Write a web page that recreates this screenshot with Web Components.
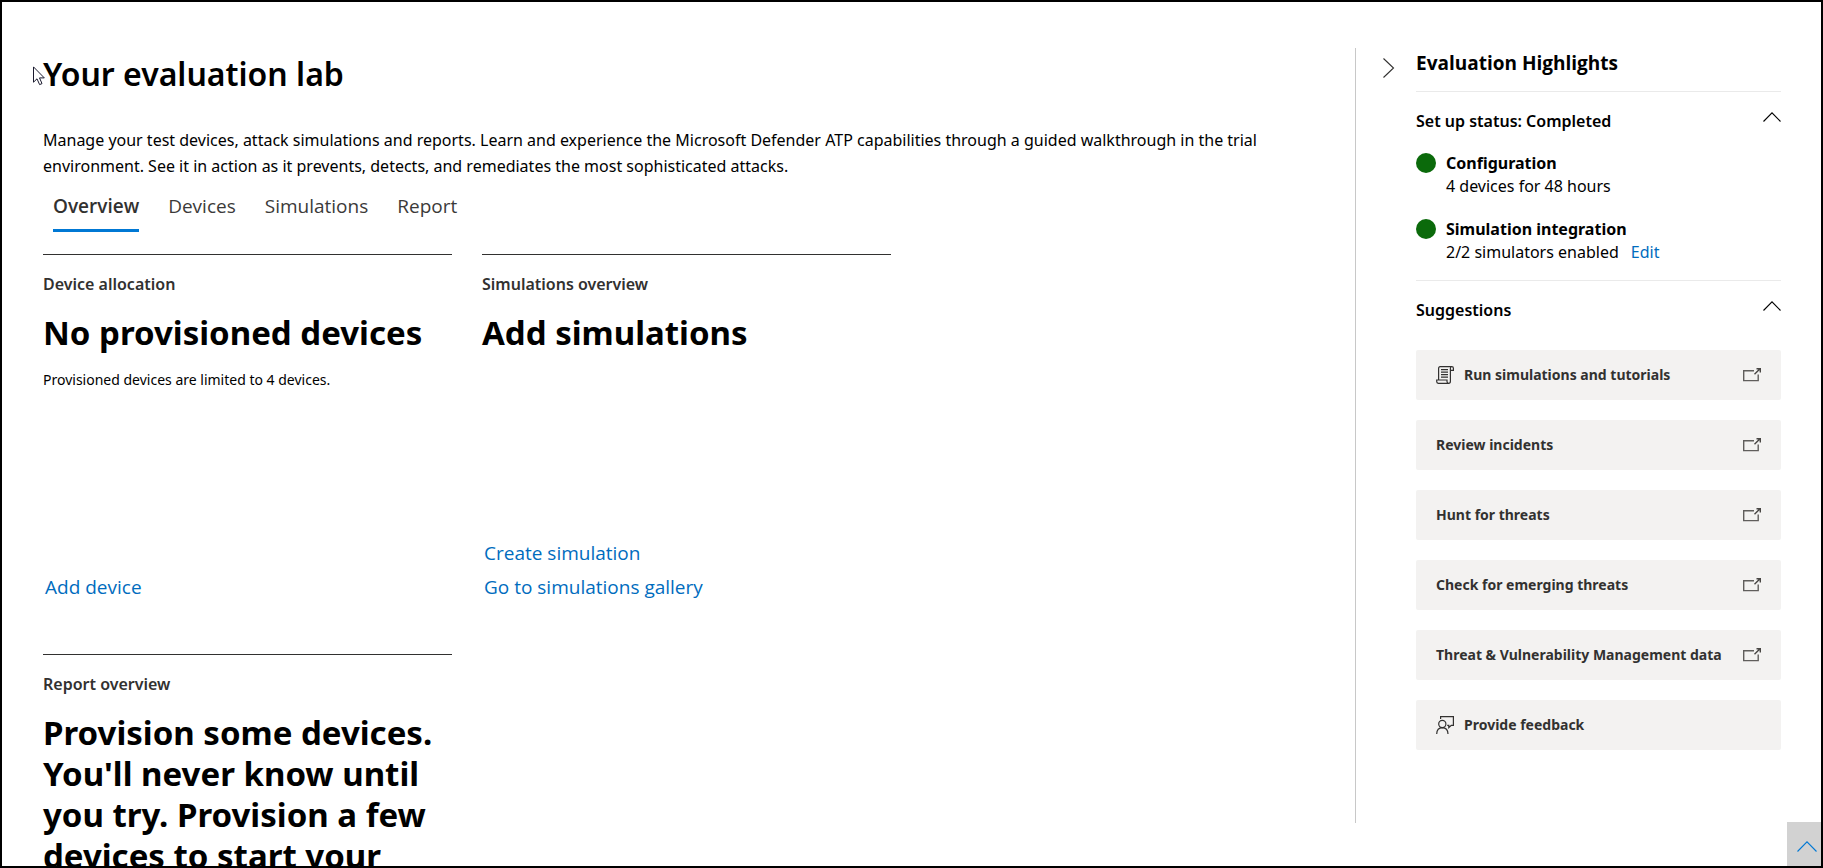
<!DOCTYPE html>
<html lang="en">
<head>
<meta charset="utf-8">
<title>Your evaluation lab</title>
<style>
  body {
    margin: 0;
    background: #fff;
    color: #000;
    font: 400 16px/24px "Noto Sans", "Open Sans", sans-serif;
    --font-wide: "Open Sans", "Noto Sans", sans-serif;
    --link: #006cbe;
    --accent: #0078d4;
  }
</style>
</head>
<body>
<lab-app>
  <lab-header slot="main" heading="Your evaluation lab">Manage your test devices, attack simulations and reports. Learn and experience the Microsoft Defender ATP capabilities through a guided walkthrough in the trial environment. See it in action as it prevents, detects, and remediates the most sophisticated attacks.</lab-header>
  <lab-tabs slot="main" items="Overview,Devices,Simulations,Report"></lab-tabs>
  <lab-cards slot="main">
    <lab-card label="Device allocation" heading="No provisioned devices">
      Provisioned devices are limited to 4 devices.
      <lab-link slot="actions">Add device</lab-link>
    </lab-card>
    <lab-card label="Simulations overview" heading="Add simulations">
      <lab-link slot="actions">Create simulation</lab-link>
      <lab-link slot="actions">Go to simulations gallery</lab-link>
    </lab-card>
    <lab-card label="Report overview" heading="Provision some devices. You'll never know until you try. Provision a few devices to start your"></lab-card>
  </lab-cards>

  <lab-highlights slot="aside" heading="Evaluation Highlights">
    <lab-section heading="Set up status: Completed">
      <lab-status heading="Configuration">4 devices for 48 hours</lab-status>
      <lab-status heading="Simulation integration">2/2 simulators enabled<lab-link inline>Edit</lab-link></lab-status>
    </lab-section>
    <lab-section heading="Suggestions" wide>
      <lab-action icon="script" external>Run simulations and tutorials</lab-action>
      <lab-action external>Review incidents</lab-action>
      <lab-action external>Hunt for threats</lab-action>
      <lab-action external>Check for emerging threats</lab-action>
      <lab-action external>Threat &amp; Vulnerability Management data</lab-action>
      <lab-action icon="feedback">Provide feedback</lab-action>
    </lab-section>
  </lab-highlights>
</lab-app>

<script>
const define = (name, render) => customElements.define(name, class extends HTMLElement {
  connectedCallback() {
    if (this.shadowRoot) return;
    const template = document.createElement('template');
    template.innerHTML = '<style>*{box-sizing:border-box}:host{display:block}h1,h2,h3,p{margin:0}button{font:inherit;color:inherit;border:0;background:none;padding:0;margin:0;cursor:pointer}svg{display:block;flex:none}</style>' + render(this);
    this.attachShadow({ mode: 'open' }).append(template.content.cloneNode(true));
  }
});
const attr = (el, name) => el.getAttribute(name) || '';

const chevronUp = (w, h, color) =>
  `<svg width="${w}" height="${h}" viewBox="0 0 ${w} ${h}" fill="none" stroke="${color}" stroke-width="1.1" aria-hidden="true"><path d="M.5 ${h - .5}L${w / 2} .8L${w - .5} ${h - .5}"/></svg>`;

const icons = {
  script: `<svg width="18" height="18" viewBox="0 0 18 18" fill="none" stroke="#323130" stroke-width="1.2" aria-hidden="true"><path d="M2.6 13.5V2.4Q2.6.7 4.2.7H15.8Q17.4.7 17.4 2.3V4.4H14.4M14.4 15.2V2.3Q14.4.7 15.8.7M2.6 14H.7V15.6Q.7 17.3 2.3 17.3H12.6Q14.4 17.3 14.4 15.2M2.6 14H11V15.6Q11 17.3 12.6 17.3"/><path d="M5 3.6H12M5 6.1H12M5 8.6H12M5 11.1H12"/></svg>`,
  feedback: `<svg width="18" height="18" viewBox="0 0 18 18" fill="none" stroke="#323130" stroke-width="1.2" aria-hidden="true"><path d="M4.6 3V.7H17.4V9.3H15.3L12.8 11.6V9.3H11.2"/><circle cx="6.3" cy="8" r="3.6"/><path d="M.7 18Q.9 11.8 6.3 11.7Q11.8 11.8 12 18"/></svg>`,
  external: `<svg width="18" height="14" viewBox="0 0 18 14" fill="none" stroke="#605e5c" stroke-width="1.4" aria-hidden="true"><path d="M11 2.7H.7V12.6H15.2V6.5"/><path d="M11.5 6.3L16.8 1M13.5.8H17.3V4.6" stroke="#484644"/></svg>`
};

define('lab-app', () => `
  <style>
    :host { position: relative; display: flex; height: 100vh; box-sizing: border-box; border: 2px solid #000; overflow: hidden; }
    main { flex: 1; min-width: 0; padding: 50px 50px 0 41px; }
    aside { width: 466px; flex: none; margin: 46px 0 43px; border-left: 1px solid #c8c8c8; }
    .top { position: absolute; right: 0; bottom: 0; width: 34px; height: 44px; display: grid; place-items: center; padding: 4px 0 0 6px; background: #d2d2d2; }
    .pointer { position: absolute; left: 31px; top: 64px; }
  </style>
  <main><slot name="main"></slot></main>
  <aside><slot name="aside"></slot></aside>
  <button class="top" aria-label="Scroll to top">${chevronUp(20, 11, 'var(--accent)')}</button>
  <svg class="pointer" width="12" height="20" viewBox="0 0 12 20" fill="#fff" stroke="#1a1a2e" aria-hidden="true"><path d="M.5 .9V16.2L4 12.8L6.6 18.6L9 17.6L6.5 11.9H11.3Z"/></svg>
`);

define('lab-header', el => `
  <style>
    h1 { font-size: 32px; line-height: 44px; font-weight: 600; }
    p { margin-top: 31px; line-height: 26px; }
  </style>
  <h1>${attr(el, 'heading')}</h1>
  <p><slot></slot></p>
`);

define('lab-tabs', el => `
  <style>
    [role=tablist] { display: flex; gap: 29px; padding: 0 10px; }
    button { padding: 14px 0 10px; border-bottom: 3px solid transparent; color: #3b3a39; font: 400 19px/26px var(--font-wide); }
    [aria-selected=true] { font-weight: 600; color: #323130; border-color: var(--accent); }
  </style>
  <div role="tablist">${attr(el, 'items').split(',').map((t, i) => `<button role="tab" aria-selected="${i === 0}">${t}</button>`).join('')}</div>
`);

define('lab-cards', () => `
  <style>
    :host { display: grid; grid-template-columns: repeat(auto-fill, 409px); grid-auto-rows: minmax(370px, auto); gap: 30px; margin-top: 22px; }
  </style>
  <slot></slot>
`);

define('lab-card', el => `
  <style>
    :host { display: flex; flex-direction: column; gap: 16px; box-sizing: border-box; border-top: 1px solid #323130; padding: 17px 0 20px; }
    h2 { font-size: 16px; line-height: 24px; font-weight: 600; color: #323130; }
    h3 { font-size: 33px; line-height: 41px; font-weight: 700; }
    p { font-size: 14px; line-height: 22px; }
    div { margin-top: auto; padding-left: 2px; }
  </style>
  <h2>${attr(el, 'label')}</h2>
  <h3>${attr(el, 'heading')}</h3>
  <p><slot></slot></p>
  <div><slot name="actions"></slot></div>
`);

define('lab-link', () => `
  <style>
    :host { font: 400 19px/34px var(--font-wide); }
    :host([inline]) { display: inline-block; margin-left: 12px; font: inherit; }
    a { color: var(--link); text-decoration: none; }
  </style>
  <a href="#"><slot></slot></a>
`);

define('lab-highlights', el => `
  <style>
    :host { display: flex; padding: 0 40px 0 27px; }
    .collapse { width: 33px; height: 20px; margin-top: 10px; flex: none; }
    .body { flex: 1; min-width: 0; }
    h2 { padding: 2px 0 15px; font: 700 19px/26px var(--font-wide); }
  </style>
  <button class="collapse" aria-label="Collapse panel"><svg width="12" height="20" viewBox="0 0 12 20" fill="none" stroke="#323130" stroke-width="1.1" aria-hidden="true"><path d="M.5 .5L10.5 10L.5 19.5"/></svg></button>
  <div class="body"><h2>${attr(el, 'heading')}</h2><slot></slot></div>
`);

define('lab-section', el => `
  <style>
    :host { border-top: 1px solid #eaeaea; padding: 17px 0 16px; }
    header { display: flex; justify-content: space-between; align-items: flex-start; }
    h3 { font-size: 16px; line-height: 24px; font-weight: 600; }
    button { margin-top: 3px; }
    .list { display: grid; gap: 20px; margin-top: 19px; }
    :host([wide]) .list { margin-top: 28px; }
  </style>
  <header><h3>${attr(el, 'heading')}</h3><button aria-expanded="true" aria-label="Toggle ${attr(el, 'heading')}">${chevronUp(18, 10, '#000')}</button></header>
  <div class="list"><slot></slot></div>
`);

define('lab-status', el => `
  <style>
    :host { display: flex; gap: 10px; line-height: 23px; }
    .dot { width: 20px; height: 20px; margin-top: 1px; border-radius: 50%; background: #0b6a0b; flex: none; }
    h3 { font-size: 16px; line-height: 23px; font-weight: 700; }
  </style>
  <span class="dot"></span>
  <div><h3>${attr(el, 'heading')}</h3><slot></slot></div>
`);

define('lab-action', el => `
  <style>
    button { display: flex; align-items: center; gap: 10px; width: 100%; height: 50px; padding: 0 20px; border-radius: 2px; background: #f3f2f1; color: #323130; font-weight: 700; font-size: 14px; line-height: 20px; text-align: left; }
    span { flex: 1; white-space: nowrap; }
  </style>
  <button>${icons[attr(el, 'icon')] || ''}<span><slot></slot></span>${el.hasAttribute('external') ? icons.external : ''}</button>
`);
</script>
</body>
</html>
